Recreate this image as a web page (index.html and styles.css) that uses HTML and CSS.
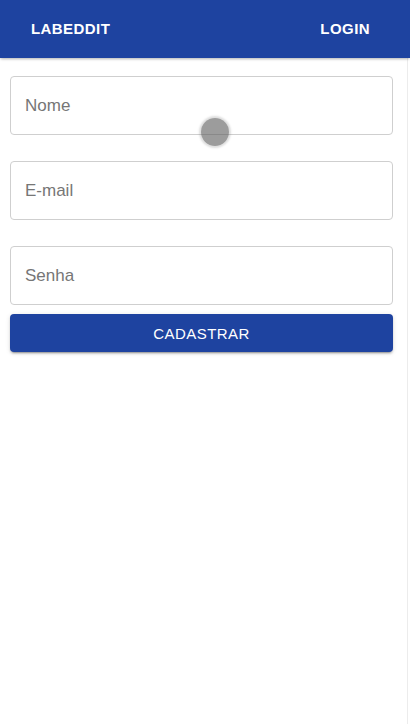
FILE: index.html
```html
<!DOCTYPE html>
<html lang="pt">
<head>
<meta charset="utf-8">
<title>Labeddit - Cadastro</title>
<link rel="stylesheet" href="styles.css">
</head>
<body>
<div class="page">
  <header class="appbar">
    <span class="brand">LABEDDIT</span>
    <span class="login">LOGIN</span>
  </header>
  <main class="content">
    <form class="signup">
      <div class="field"><input class="input" type="text" placeholder="Nome"></div>
      <div class="field"><input class="input" type="email" placeholder="E-mail"></div>
      <div class="field"><input class="input" type="password" placeholder="Senha"></div>
      <button class="submit" type="button">CADASTRAR</button>
    </form>
  </main>
</div>
<div class="touch-cursor"></div>
</body>
</html>
```
FILE: styles.css
```css
html, body {
  margin: 0;
  padding: 0;
  height: 100%;
  background: #ffffff;
  font-family: "Liberation Sans", Arial, sans-serif;
}

.page {
  min-height: 100%;
  display: flex;
  flex-direction: column;
}

.appbar {
  height: 58px;
  background: #1e43a0;
  color: #ffffff;
  display: flex;
  align-items: center;
  justify-content: space-between;
  padding: 0 40px 2px 31px;
  box-sizing: border-box;
  box-shadow: 0 2px 3px -1px rgba(0,0,0,0.2), 0 1px 2px 0 rgba(0,0,0,0.12);
  position: relative;
  z-index: 1;
}

.brand, .login {
  font-size: 15px;
  font-weight: 700;
  letter-spacing: 0.43px;
  line-height: 1;
}

.content {
  flex: 1;
  margin-right: 2px;
  border-right: 1px solid #ececec;
}

.signup {
  display: flex;
  flex-direction: column;
  padding: 18px 14px 0 10px;
}

.field {
  margin-bottom: 26px;
}

.field:nth-child(3) {
  margin-bottom: 9px;
}

.input {
  display: block;
  width: 100%;
  box-sizing: border-box;
  height: 59px;
  border: 1px solid #cfcfcf;
  border-radius: 4px;
  padding: 0 14px;
  font-family: "Liberation Sans", Arial, sans-serif;
  font-size: 17px;
  color: #333;
  background: #fff;
  outline: none;
}

.input::placeholder {
  color: #767676;
  opacity: 1;
}

.submit {
  height: 38px;
  border: none;
  border-radius: 4px;
  background: #1e43a0;
  color: #ffffff;
  font-family: "Liberation Sans", Arial, sans-serif;
  font-size: 15px;
  letter-spacing: 0.43px;
  box-shadow: 0 3px 1px -2px rgba(0,0,0,0.2), 0 2px 2px 0 rgba(0,0,0,0.14), 0 1px 5px 0 rgba(0,0,0,0.12);
  cursor: pointer;
}

.touch-cursor {
  position: absolute;
  left: 201px;
  top: 118px;
  width: 28px;
  height: 28px;
  border-radius: 50%;
  background: rgba(90,90,90,0.6);
  box-shadow: 0 0 2px 2px rgba(90,90,90,0.2);
}
```
